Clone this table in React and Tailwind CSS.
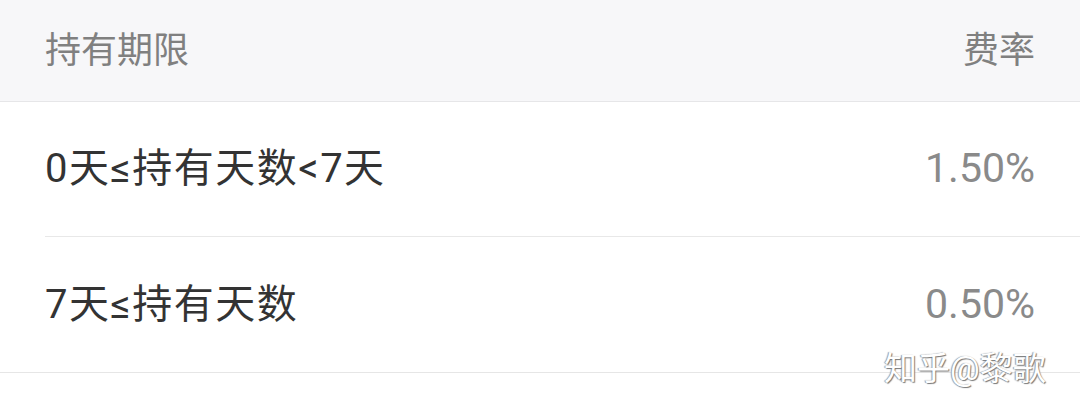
const rows = [
  { range: "0天≤持有天数<7天", rate: "1.50%" },
  { range: "7天≤持有天数", rate: "0.50%" },
];

const font = { fontFamily: 'Roboto, "Noto Sans CJK SC", sans-serif' };

export default function App() {
  return (
    <div className="relative w-[1080px] h-[413px] bg-white overflow-hidden" style={font}>
      <div className="flex items-center justify-between h-[102px] px-[45px] bg-[#f7f7f9] border-b border-[#e6e6e8] text-[36px] text-[#808080]">
        <span>持有期限</span>
        <span>费率</span>
      </div>
      {rows.map((row, i) => (
        <div key={i} className={i === rows.length - 1 ? "border-b border-[#e6e6e6]" : "pl-[45px]"}>
          <div
            className={`flex items-center justify-between h-[135px] pr-[45px] ${
              i === rows.length - 1 ? "pl-[45px]" : "border-b border-[#e8e8e8]"
            }`}
          >
            <span className="text-[40px] tracking-[1.5px] text-[#333333]">{row.range}</span>
            <span className="text-[41px] text-[#8a8a8a]">{row.rate}</span>
          </div>
        </div>
      ))}
      <div
        className="absolute left-[884px] top-[344px] text-[33px] text-white tracking-[0px]"
        style={{ textShadow: "1px 1px 1px #777, -1px 0 1px #999" }}
      >
        知乎@黎歌
      </div>
    </div>
  );
}
